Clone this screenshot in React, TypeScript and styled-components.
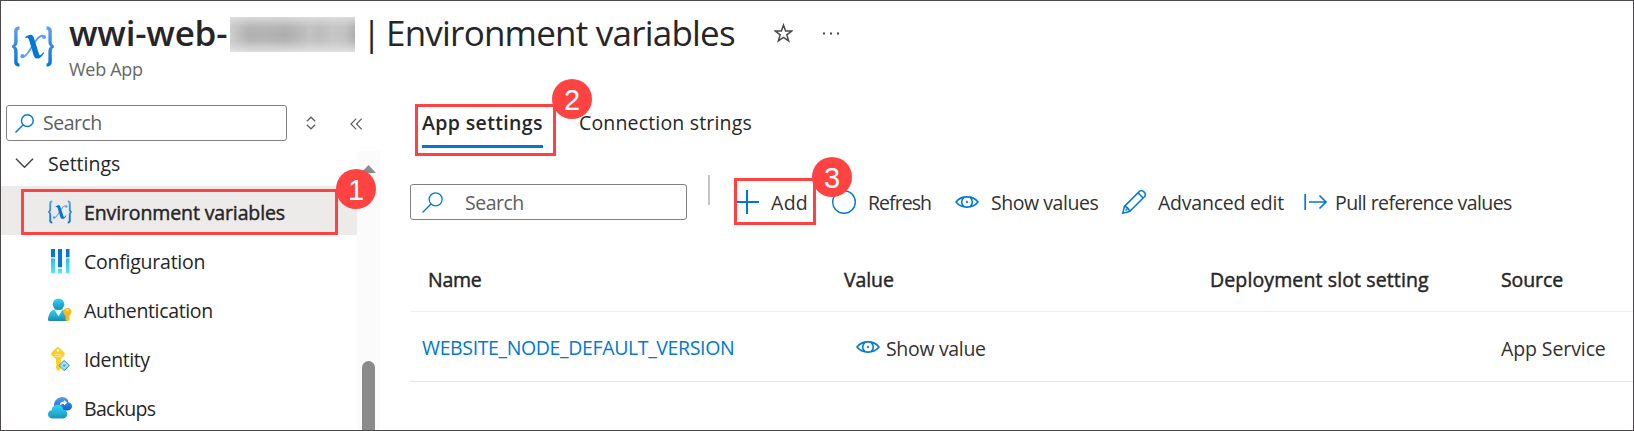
import React from 'react';
import styled, { createGlobalStyle } from 'styled-components';

const GlobalStyle = createGlobalStyle`
  * { box-sizing: border-box; }
  body { margin: 0; background: #fff; }
  svg { display: block; flex: none; }
`;

const Page = styled.div`
  position: relative;
  width: 1634px;
  height: 431px;
  overflow: hidden;
  border: 1px solid #4b474b;
  background: #fff;
  color: #262626;
  font-family: 'Open Sans', 'Noto Sans', sans-serif;
  font-size: 19.5px;
  line-height: 28px;
`;

/* $medium thickens the regular face, which has no medium weight of its own */
const Text = styled.span<{ $track?: number; $weight?: number; $medium?: boolean }>`
  white-space: nowrap;
  letter-spacing: ${(p) => p.$track ?? 0}px;
  font-weight: ${(p) => p.$weight ?? 400};
  -webkit-text-stroke: ${(p) => (p.$medium ? '0.45px currentColor' : '0')};
`;

/* Header */
const Header = styled.header`
  display: flex;
  height: 94px;
  padding: 8px 0 0 11px;
`;
const LogoSlot = styled.div`
  width: 57px;
  padding-top: 17px;
`;
const TitleLine = styled.div`
  display: flex;
  align-items: center;
  height: 48px;
  font-size: 35px;
  line-height: 48px;
`;
const TitlePart = styled.div<{ $width: number; $pad?: number }>`
  width: ${(p) => p.$width}px;
  padding-left: ${(p) => p.$pad ?? 0}px;
  white-space: nowrap;
`;
const Redaction = styled.div`
  width: 125px;
  height: 35px;
  margin-top: 2px;
  overflow: hidden;
  background: #cfcfcf;
`;
const RedactionSmear = styled.div`
  height: 100%;
  background:
    linear-gradient(180deg, rgba(224, 224, 224, 0.85) 0%, rgba(200, 200, 200, 0.3) 28%, rgba(185, 185, 185, 0) 50%, rgba(200, 200, 200, 0.3) 68%, rgba(228, 228, 228, 0.9) 100%),
    linear-gradient(90deg, #cecece 0%, #b0b0b0 15%, #b2b2b2 30%, #acacac 44%, #b8b8b8 56%, #c2c2c2 64%, #bcbcbc 72%, #c6c6c6 82%, #c2c2c2 92%, #adadad 100%);
`;
const Subtitle = styled.div`
  color: #666;
  font-size: 18px;
  line-height: 24px;
`;
const MoreSlot = styled.div`
  margin-left: 30px;
`;

/* Body */
const Body = styled.div`
  display: grid;
  grid-template-columns: 379px 1fr;
  height: 335px;
`;
const Sidebar = styled.aside`
  padding-top: 10px;
`;
const SideTools = styled.div`
  display: flex;
  align-items: center;
  height: 36px;
  padding-left: 5px;
`;
const SearchBox = styled.div<{ $width: number; $gap: number; $inset: number }>`
  display: flex;
  align-items: center;
  gap: ${(p) => p.$gap}px;
  width: ${(p) => p.$width}px;
  height: 36px;
  padding-left: ${(p) => p.$inset}px;
  border: 1px solid #83817f;
  border-radius: 3px;
  color: #605e5c;
`;
const SortSlot = styled.div`
  margin: 0 34px 0 19px;
`;
const SideBody = styled.div`
  display: flex;
  height: 289px;
`;
const NavList = styled.nav`
  width: 356px;
`;
const GroupRow = styled.div`
  display: flex;
  align-items: center;
  height: 45px;
  padding-left: 14px;
  gap: 14px;
`;
const NavRow = styled.div<{ $active?: boolean }>`
  display: flex;
  align-items: center;
  height: 49px;
  padding: 2px 0 0 47px;
  gap: 12px;
  background: ${(p) => (p.$active ? '#edebe9' : 'transparent')};
`;
const NavLabel = styled(Text)`
  padding-top: 3px;
`;
const ScrollTrack = styled.div`
  width: 23px;
  margin-top: 10px;
  padding: 14px 0 0 4px;
  background: #fbfbfb;
`;
const ScrollThumb = styled.div`
  width: 13px;
  height: 80px;
  margin: 188px 0 0 1px;
  border-radius: 7px;
  background: #8b8b8b;
`;

/* Main */
const Main = styled.main`
  padding: 12px 0 0 30px;
`;
const Tabs = styled.div`
  display: flex;
  gap: 36px;
  height: 77px;
  padding-left: 12px;
`;
const Tab = styled.div<{ $active?: boolean }>`
  width: ${(p) => (p.$active ? '121px' : 'auto')};
  height: 41px;
  padding-top: 2px;
  border-bottom: 3px solid ${(p) => (p.$active ? '#0078d4' : 'transparent')};
`;
const Toolbar = styled.div`
  display: grid;
  grid-template-columns: 298px 28px 96px 123px 167px 182px 1fr;
  align-items: center;
  height: 36px;
`;
const Divider = styled.div`
  width: 2px;
  height: 30px;
  margin-top: -24px;
  background: #c8c6c4;
`;
const Command = styled.div<{ $gap: number }>`
  display: flex;
  align-items: center;
  gap: ${(p) => p.$gap}px;
  color: #323130;
`;
const Nudged = styled(Text)`
  padding-top: 2px;
`;
const TableRow = styled.div<{ $height: number; $rule: string }>`
  display: grid;
  grid-template-columns: 434px 366px 291px 1fr;
  align-items: center;
  height: ${(p) => p.$height}px;
  border-bottom: 1px solid ${(p) => p.$rule};
`;
const HeadRow = styled(TableRow)`
  margin-top: 29px;
`;
const Cell = styled.div<{ $pad?: number }>`
  display: flex;
  align-items: center;
  gap: 6px;
  padding-left: ${(p) => p.$pad ?? 0}px;
`;
const LinkText = styled(Text)`
  padding-top: 2px;
  color: #0078d4;
`;
const CellText = styled(Text)`
  padding-top: 4px;
  margin-bottom: -1px;
  color: #323130;
`;

/* Numbered callouts that lie over the page */
const Outline = styled.div<{ $x: number; $y: number; $w: number; $h: number }>`
  position: absolute;
  left: ${(p) => p.$x - 1}px;
  top: ${(p) => p.$y - 1}px;
  width: ${(p) => p.$w}px;
  height: ${(p) => p.$h}px;
  border: 3px solid #ff4343;
`;
const Badge = styled.div<{ $x: number; $y: number }>`
  position: absolute;
  left: ${(p) => p.$x - 21}px;
  top: ${(p) => p.$y - 21}px;
  width: 40px;
  height: 40px;
  border-radius: 50%;
  background: #ff4343;
  color: #fff;
  font: 29px/42px 'Liberation Sans', Arial, sans-serif;
  text-align: center;
`;

const BLUE = '#0078d4';

const VariableIcon = ({ width, height }: { width: number; height: number }) => (
  <svg width={width} height={height} viewBox="0 0 42 40" fill="none">
    <defs>
      <linearGradient id="vb" x1="0" y1="0" x2="0" y2="1">
        <stop offset="0" stopColor="#5ea0ef" />
        <stop offset="1" stopColor="#0078d4" />
      </linearGradient>
    </defs>
    <path d="M7.5 0v3C5.6 3.2 5.600 4.200 5.600 6v9c0 2.600-.8 4.200-2.400 5 1.600.8 2.400 2.400 2.400 5v9c0 1.800 0 2.800 1.900 3v3C3.600 40 2.200 38.200 2.200 35v-9.500C2.200 22.700 1.700 21.500 0 21v-2c1.700-.5 2.200-1.700 2.200-4.500V5C2.200 1.800 3.600 0 7.500 0Z" fill="url(#vb)" />
    <path d="M34.500 0v3c1.900.2 1.900 1.200 1.900 3v9c0 2.600.8 4.200 2.400 5-1.600.8-2.400 2.400-2.400 5v9c0 1.800 0 2.800-1.900 3v3c3.900 0 5.300-1.800 5.300-5v-9.500c0-2.800.5-4 2.200-4.500v-2c-1.700-.5-2.200-1.700-2.200-4.500V5c0-3.200-1.400-5-5.300-5Z" fill="url(#vb)" />
    <path d="M10.500 30.500c2.500 0 4.300-2.300 7-6.500l4.500-7c3.200-5.200 5.500-8 9-8" stroke="#5ea0ef" strokeWidth="1.800" />
    <circle cx="32" cy="10.500" r="2.100" fill="#5ea0ef" />
    <circle cx="10.500" cy="29.700" r="2.100" fill="#5ea0ef" />
    <path d="M13.200 10.500C16.500 8 20 7 21.500 10.200L27 27.500c.7 2 1.800 1.700 4.300-1.800l.9.800c-2.700 4.400-5 5.900-7.500 5.500-1.600-.3-2.500-1.300-3.100-3.300L16.900 13c-.7-2-1.500-2.100-3.300-1.400Z" fill="#0078d4" />
  </svg>
);

const ConfigIcon = () => (
  <svg width="24" height="24" viewBox="0 0 24 24">
    <defs>
      <linearGradient id="cf" x1="0" y1="0" x2="0" y2="1">
        <stop offset="0" stopColor="#32bedd" />
        <stop offset="1" stopColor="#50e6ff" />
      </linearGradient>
    </defs>
    <path d="M3 0h4v8H3zM10 0h4v18h-4zM18 0h3.500v8H18z" fill={BLUE} />
    <path d="M3 8h4v1.500H3zM10 18h4v1.500h-4zM18 8h3.500v1.500H18z" fill="#d8d8d8" />
    <path d="M3 9.500h4V24H3zM10 20h4v4h-4zM18 9.500h3.500V24H18z" fill="url(#cf)" />
  </svg>
);

const AuthIcon = () => (
  <svg width="24" height="24" viewBox="0 0 24 24">
    <defs>
      <linearGradient id="au" x1="0" y1="0" x2="0" y2="1">
        <stop offset="0" stopColor="#32d4f5" />
        <stop offset="1" stopColor="#198ab3" />
      </linearGradient>
    </defs>
    <path d="M1.500 23A1.500 1.500 0 0 1 0 21.300C.6 16 3 12 7 11.500h7c3 .8 5.500 5 6 9.800A1.500 1.500 0 0 1 18.500 23Z" fill="url(#au)" />
    <path d="m6.800 12 3.700 6.500L14.200 12Z" fill="#e8fbff" />
    <circle cx="10.500" cy="6.300" r="5.800" fill="url(#au)" />
    <path d="M19.500 10a4 4 0 0 1 4 4c0 1.800-1 2.700-2 3.400V22l-1.300 1h-1.500L17.500 22v-4.500c-1.100-.7-2-1.700-2-3.500a4 4 0 0 1 4-4Z" fill="#fbb91a" />
    <circle cx="19.500" cy="12.300" r="1.100" fill="#fff3c4" />
  </svg>
);

const IdentityIcon = () => (
  <svg width="24" height="24" viewBox="0 0 24 24">
    <path d="M10 0c1 0 6.500 5.500 6.800 6.500.3 1.200-.8 2.500-4 5.500v9.500L10.600 24 8 21.500v-3l1-1-1-1V12C4.300 9 2.800 7.500 3 6.500 3.300 5.400 9 0 10 0Z" fill="#ffce1f" />
    <circle cx="10" cy="3.600" r="1.400" fill="#fff" />
    <path d="M6.500 7.500h7M6.500 9.500h7" stroke="#ffe98c" />
    <path d="m16.200 13.300 5.300 5.200-5.300 5.300-5.300-5.300Z" fill="#8fd0ea" stroke="#3999c6" strokeWidth=".9" />
    <path d="m16.200 15.300 2.800 3.400-2.800 2-2.800-2ZM16.200 15.300v5.400" fill="none" stroke="#d9f2fb" strokeWidth=".6" />
    <circle cx="16.200" cy="18.700" r="1.100" fill="#3999c6" />
  </svg>
);

const BackupIcon = () => (
  <svg width="24" height="24" viewBox="0 0 24 24">
    <defs>
      <linearGradient id="bk" x1="0" y1="0" x2="0" y2="1">
        <stop offset="0" stopColor="#5b9df0" />
        <stop offset="1" stopColor="#0d5fcc" />
      </linearGradient>
      <linearGradient id="bc" x1="0" y1="0" x2="0" y2="1">
        <stop offset="0" stopColor="#32d4f5" />
        <stop offset="1" stopColor="#1a94bd" />
      </linearGradient>
    </defs>
    <path d="M6 9.500C6 4.500 10 1 14.500 1c3.500 0 5.500 2.200 6 5.200 2.200.4 3.500 2 3.500 4 0 2.500-2 4.300-4.500 4.300H9Z" fill="url(#bk)" />
    <path d="M11.800 8.300c.5-1.900 2-2.900 4.200-2.900V4l3.200 2.700L16 9.400V7.900c-2 0-2.500.3-3.700 1.200Z" fill="#fff" />
    <path d="M4.700 22.500C2 22.500 0 20.700 0 18.300c0-2.300 1.500-3.800 3.700-4.100C4 11 6.300 8.800 9.600 8.800c3.100 0 5.200 1.900 5.700 4.700 2.400.3 4 2 4 4.400 0 2.700-2.100 4.600-4.800 4.600Z" fill="url(#bc)" />
  </svg>
);

const SearchIcon = ({ size, line }: { size: number; line: number }) => (
  <svg width={size} height={size} viewBox="0 0 20 20" fill="none" stroke={BLUE} strokeWidth={line}>
    <circle cx="13" cy="7" r="6.200" />
    <path d="M8.600 11.400.5 19.500" />
  </svg>
);

const EyeIcon = () => (
  <svg width="24" height="12" viewBox="0 0 24 12" fill="none" stroke={BLUE} strokeWidth="1.600">
    <path d="M1 6C3.500 2.800 7.300.9 12 .9S20.500 2.800 23 6C20.500 9.200 16.700 11.100 12 11.100S3.500 9.200 1 6Z" />
    <path d="M8.800 1.600a5.600 5.600 0 0 0 0 8.800M15.200 1.600a5.600 5.600 0 0 1 0 8.800" />
    <path d="M10.800 6h2.400M12 4.800v2.400" strokeWidth="1.200" />
  </svg>
);

const nav = [
  { label: 'Environment variables', track: -0.12, icon: <VariableIcon width={24} height={24} />, active: true },
  { label: 'Configuration', track: -0.24, icon: <ConfigIcon /> },
  { label: 'Authentication', track: -0.35, icon: <AuthIcon /> },
  { label: 'Identity', track: -0.4, icon: <IdentityIcon /> },
  { label: 'Backups', track: -0.7, icon: <BackupIcon /> },
];

export default function App() {
  return (
    <Page>
      <GlobalStyle />
      <Header>
        <LogoSlot><VariableIcon width={42} height={41} /></LogoSlot>
        <div>
          <TitleLine>
            <TitlePart $width={161}><Text $weight={600} $track={-0.2}>wwi-web-</Text></TitlePart>
            <Redaction><RedactionSmear /></Redaction>
            <TitlePart $width={31} $pad={7}>|</TitlePart>
            <TitlePart $width={388}><Text $track={-0.78}>Environment variables</Text></TitlePart>
            <svg width="19" height="20" viewBox="0 0 19 20" fill="none" stroke="#4a4a4a" strokeWidth="1.500">
              <path d="m9.500 2 2.100 5.900 6.100.1-4.900 3.800 1.800 6.100-5.100-3.600-5.100 3.600 1.800-6.100L1.300 8l6.100-.1Z" />
            </svg>
            <MoreSlot>
              <svg width="16" height="3" viewBox="0 0 16 3" fill="#444">
                <path d="M0 .5h2v2H0zM7 .5h2v2H7zM14 .5h2v2h-2z" />
              </svg>
            </MoreSlot>
          </TitleLine>
          <Subtitle><Text $track={-0.3}>Web App</Text></Subtitle>
        </div>
      </Header>
      <Body>
        <Sidebar>
          <SideTools>
            <SearchBox $width={281} $inset={8} $gap={9}>
              <SearchIcon size={19} line={1.5} />
              <Text $track={-0.5}>Search</Text>
            </SearchBox>
            <SortSlot>
              <svg width="10" height="14" viewBox="0 0 10 14" fill="none" stroke="#605e5c" strokeWidth="1.200">
                <path d="M.8 5.300 5 1.200l4.200 4.100M.8 8.700 5 12.800l4.200-4.100" />
              </svg>
            </SortSlot>
            <svg width="13" height="14" viewBox="0 0 13 14" fill="none" stroke="#605e5c" strokeWidth="1.200">
              <path d="M6.200 2.700 1 8l5.200 5.300M11.700 2.700 6.500 8l5.200 5.300" />
            </svg>
          </SideTools>
          <SideBody>
            <NavList>
              <GroupRow>
                <svg width="19" height="11" viewBox="0 0 19 11" fill="none" stroke="#444" strokeWidth="1.500">
                  <path d="m1 .8 8.500 8.500L18 .8" />
                </svg>
                <Text>Settings</Text>
              </GroupRow>
              {nav.map((item) => (
                <NavRow key={item.label} $active={item.active}>
                  {item.icon}
                  <NavLabel $track={item.track} $medium={item.active}>{item.label}</NavLabel>
                </NavRow>
              ))}
            </NavList>
            <ScrollTrack>
              <svg width="15" height="8" viewBox="0 0 15 8"><path d="M7.500 0 15 8H0Z" fill="#8b8b8b" /></svg>
              <ScrollThumb />
            </ScrollTrack>
          </SideBody>
        </Sidebar>
        <Main>
          <Tabs>
            <Tab $active><Text $weight={600} $track={0.36}>App settings</Text></Tab>
            <Tab><Text $track={0.17}>Connection strings</Text></Tab>
          </Tabs>
          <Toolbar>
            <SearchBox $width={277} $inset={11} $gap={22}>
              <SearchIcon size={21} line={1.2} />
              <Nudged $track={-0.5}>Search</Nudged>
            </SearchBox>
            <Divider />
            <Command $gap={11}>
              <svg width="24" height="24" viewBox="0 0 24 24" stroke={BLUE} strokeWidth="2"><path d="M1 12h22M11 0v24" /></svg>
              <Nudged $track={0.3}>Add</Nudged>
            </Command>
            <Command $gap={12}>
              <svg width="24" height="24" viewBox="0 0 24 24" fill="none" stroke={BLUE} strokeWidth="1.400"><circle cx="12" cy="12" r="11.300" /></svg>
              <Nudged $track={-0.95}>Refresh</Nudged>
            </Command>
            <Command $gap={12}>
              <EyeIcon />
              <Nudged $track={-0.45}>Show values</Nudged>
            </Command>
            <Command $gap={12}>
              <svg width="24" height="24" viewBox="0 0 24 24" fill="none" stroke={BLUE} strokeWidth="1.500">
                <path d="m.8 23.200 1.600-6.800L17.200 1.600c1.300-1.300 3.200-1.100 4.400 0l.8.800c1.200 1.200 1.200 3.100 0 4.400L7.600 21.600ZM16 2.800l5.200 5.200M2.400 16.400c2.500.3 4.700 2.400 5.200 5.200M3.500 20.500 6 18" />
              </svg>
              <Nudged $track={-0.22}>Advanced edit</Nudged>
            </Command>
            <Command $gap={7}>
              <svg width="24" height="18" viewBox="0 0 24 18" fill="none" stroke={BLUE} strokeWidth="1.700">
                <path d="M1.200 1v16M5 9h17M15.500 2.500 22 9l-6.500 6.500" />
              </svg>
              <Nudged $track={-0.58}>Pull reference values</Nudged>
            </Command>
          </Toolbar>
          <HeadRow $height={63} $rule="#f0f0f0">
            <Cell $pad={18}><Text $medium $track={-0.3}>Name</Text></Cell>
            <Cell><Text $medium $track={-0.1}>Value</Text></Cell>
            <Cell><Text $medium $track={0.12}>Deployment slot setting</Text></Cell>
            <Cell><Text $medium $track={-0.1}>Source</Text></Cell>
          </HeadRow>
          <TableRow $height={70} $rule="#e6e6e6">
            <Cell $pad={12}><LinkText $track={-0.37}>WEBSITE_NODE_DEFAULT_VERSION</LinkText></Cell>
            <Cell $pad={12}><EyeIcon /><CellText $track={-0.33}>Show value</CellText></Cell>
            <Cell />
            <Cell><CellText $track={-0.1}>App Service</CellText></Cell>
          </TableRow>
        </Main>
      </Body>
      <Outline $x={21} $y={189} $w={317} $h={46} />
      <Outline $x={415} $y={104} $w={141} $h={52} />
      <Outline $x={734} $y={178} $w={82} $h={47} />
      <Badge $x={356} $y={189}>1</Badge>
      <Badge $x={572} $y={99}>2</Badge>
      <Badge $x={832} $y={177}>3</Badge>
    </Page>
  );
}
